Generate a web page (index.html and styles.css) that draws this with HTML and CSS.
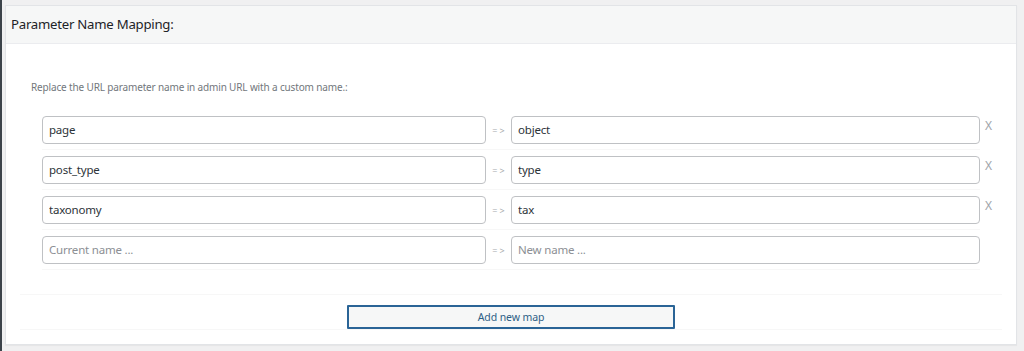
FILE: index.html
```html
<!DOCTYPE html>
<html>
<head>
<meta charset="utf-8">
<link rel="stylesheet" href="styles.css">
</head>
<body>
<div class="screen">
  <div class="adminbar-edge"></div>
  <div class="wrap">
    <div class="panel">
      <div class="panel-head">Parameter Name Mapping:</div>
      <div class="panel-body">
        <p class="desc">Replace the URL parameter name in admin URL with a custom name.:</p>
        <div class="maps">
          <div class="map-row">
            <input class="field" type="text" value="page">
            <span class="arrow">=&gt;</span>
            <input class="field" type="text" value="object">
            <span class="remove">X</span>
          </div>
          <div class="map-row">
            <input class="field" type="text" value="post_type">
            <span class="arrow">=&gt;</span>
            <input class="field" type="text" value="type">
            <span class="remove">X</span>
          </div>
          <div class="map-row">
            <input class="field" type="text" value="taxonomy">
            <span class="arrow">=&gt;</span>
            <input class="field" type="text" value="tax">
            <span class="remove">X</span>
          </div>
          <div class="map-row">
            <input class="field" type="text" placeholder="Current name ...">
            <span class="arrow">=&gt;</span>
            <input class="field" type="text" placeholder="New name ...">
            <span class="remove"></span>
          </div>
        </div>
        <div class="spacer-row"></div>
        <div class="button-row">
          <button class="add-btn" type="button">Add new map</button>
        </div>
      </div>
    </div>
  </div>
</div>
</body>
</html>
```

FILE: styles.css
```css
html, body {
  margin: 0;
  padding: 0;
  height: 100%;
}
body {
  background: #f0f0f1;
  font-family: "Noto Sans", "Open Sans", sans-serif;
  color: #2c3338;
}
.screen {
  display: flex;
  height: 351px;
}
.adminbar-edge {
  width: 2px;
  background: #3c434a;
  flex: none;
}
.wrap {
  flex: 1;
  padding: 5px 7px 6px 3px;
}
.panel {
  background: #fff;
  border: 1px solid #e2e4e7;
  box-shadow: 0 1px 1px rgba(0,0,0,0.04);
  height: 100%;
  box-sizing: border-box;
}
.panel-head {
  height: 37px;
  background: #f6f7f7;
  border-bottom: 1px solid #ebecef;
  padding-left: 5px;
  font-size: 13.2px;
  line-height: 37px;
  color: #1d2327;
  letter-spacing: -0.25px;
}
.panel-body {
  padding: 0 14px 0 14px;
}
.desc {
  margin: 36px 0 0 11px;
  font-size: 10px;
  line-height: 15px;
  color: #72777c;
  letter-spacing: -0.15px;
}
.maps {
  margin: 15px 0 0 22px;
  width: 938px;
}
.map-row {
  display: grid;
  grid-template-columns: 444px 25px 469px;
  align-items: center;
  height: 40px;
  border-bottom: 1px solid #f7f7f7;
  box-sizing: border-box;
  position: relative;
}
.field {
  height: 28px;
  box-sizing: border-box;
  border: 1px solid #bfc1c4;
  border-radius: 4px;
  padding: 0 6px;
  font-family: "Noto Sans", "Open Sans", sans-serif;
  font-size: 11.5px;
  letter-spacing: -0.2px;
  color: #2c3338;
  background: #fff;
  outline: none;
  width: 100%;
}
.field::placeholder {
  color: #8c8f94;
}
.arrow {
  font-size: 9px;
  color: #a7aaad;
  letter-spacing: 2px;
  text-align: center;
  padding-left: 2px;
  padding-top: 1px;
}
.remove {
  position: absolute;
  left: 943px;
  top: 7px;
  font-size: 12px;
  color: #a0a5aa;
}
.spacer-row {
  height: 24px;
  border-bottom: 1px solid #f7f7f7;
}
.button-row {
  height: 34px;
  border-bottom: 1px solid #f7f7f7;
  display: flex;
  justify-content: center;
  align-items: flex-end;
}
.add-btn {
  width: 328px;
  height: 24px;
  border: 2px solid #2a6496;
  border-radius: 1px;
  background: #f6f7f7;
  color: #2e5f86;
  font-family: "Noto Sans", "Open Sans", sans-serif;
  font-size: 10.5px;
  letter-spacing: -0.1px;
  padding: 0;
}
```
